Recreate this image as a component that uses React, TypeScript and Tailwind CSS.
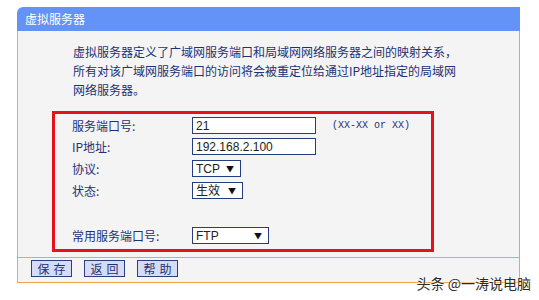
const cjk = "font-['Noto_Sans_CJK_SC','Noto_Sans',sans-serif]";

type RowProps = {
  label: string;
  children: React.ReactNode;
  className?: string;
};

function FormRow({ label, children, className }: RowProps) {
  return (
    <div className={`flex h-[17px] items-center ${className ?? ""}`}>
      <span className="w-[120px] text-[12px] leading-none text-[#1c3274]">{label}</span>
      {children}
    </div>
  );
}

function TextBox({ value }: { value: string }) {
  return (
    <div className="flex h-[17px] w-[124px] items-center border border-[#263c7e] bg-white pl-[3px] font-['Liberation_Sans',sans-serif] text-[12px] leading-none text-[#222]">
      {value}
    </div>
  );
}

function SelectBox({ value, width }: { value: string; width: string }) {
  return (
    <div
      className={`flex h-[17px] ${width} items-center justify-between border border-[#263c7e] bg-white pl-[3px] pr-[6px] text-[12px] leading-none text-[#222]`}
    >
      <span className={`font-['Liberation_Sans','Noto_Sans_CJK_SC',sans-serif]`}>{value}</span>
      <span className="text-[8px] text-[#111]">▼</span>
    </div>
  );
}

function PanelButton({ label }: { label: string }) {
  return (
    <button className="flex h-[17px] w-[41px] items-center justify-center border border-[#2b3f7e] bg-[#d6dbf6] text-[12px] leading-none tracking-[4px] text-[#1c3274]">
      <span className="pl-[4px]">{label}</span>
    </button>
  );
}

export default function App() {
  return (
    <div className={`relative h-[300px] w-[539px] overflow-hidden bg-white ${cjk}`}>
      <div className="w-[520px] pl-[17px] pt-[7px]">
        <div className="flex h-[24px] items-center rounded-tl-[6px] bg-[#6393f6] pl-[8px] text-[12px] text-white">
          虚拟服务器
        </div>
        <div className="border-x border-b border-[#f0a546] bg-[#f4f4f4]">
          <p className="pl-[55px] pt-[11px] text-[12px] leading-[19px] text-[#1c3274]">
            虚拟服务器定义了广域网服务端口和局域网网络服务器之间的映射关系，
            <br />
            所有对该广域网服务端口的访问将会被重定位给通过IP地址指定的局域网
            <br />
            网络服务器。
          </p>

          <div className="ml-[34px] mt-[12px] w-[382px] border-[3px] border-[#e5121b] pb-[5px] pl-[17px] pt-[3px]">
            <FormRow label="服务端口号:">
              <TextBox value="21" />
              <span className="ml-[16px] font-['Liberation_Mono',monospace] text-[10px] text-[#1c3274]">
                (XX-XX or XX)
              </span>
            </FormRow>
            <FormRow label="IP地址:" className="mt-[4px]">
              <TextBox value="192.168.2.100" />
            </FormRow>
            <FormRow label="协议:" className="mt-[5px]">
              <SelectBox value="TCP" width="w-[49px]" />
            </FormRow>
            <FormRow label="状态:" className="mt-[5px]">
              <SelectBox value="生效" width="w-[51px]" />
            </FormRow>
            <FormRow label="常用服务端口号:" className="mt-[28px]">
              <SelectBox value="FTP" width="w-[77px]" />
            </FormRow>
          </div>

          <div className="mt-[5px] border-t border-[#f0a546]" />
          <div className="flex gap-[12px] pb-[5px] pl-[13px] pt-[2px]">
            <PanelButton label="保存" />
            <PanelButton label="返回" />
            <PanelButton label="帮助" />
          </div>
        </div>
      </div>

      <div className="absolute right-[8px] top-[274px] text-[14px] leading-[18px] text-[#2a2a2a] [text-shadow:0_0_2px_#fff,0_0_2px_#fff]">
        头条 @一涛说电脑
      </div>
    </div>
  );
}
